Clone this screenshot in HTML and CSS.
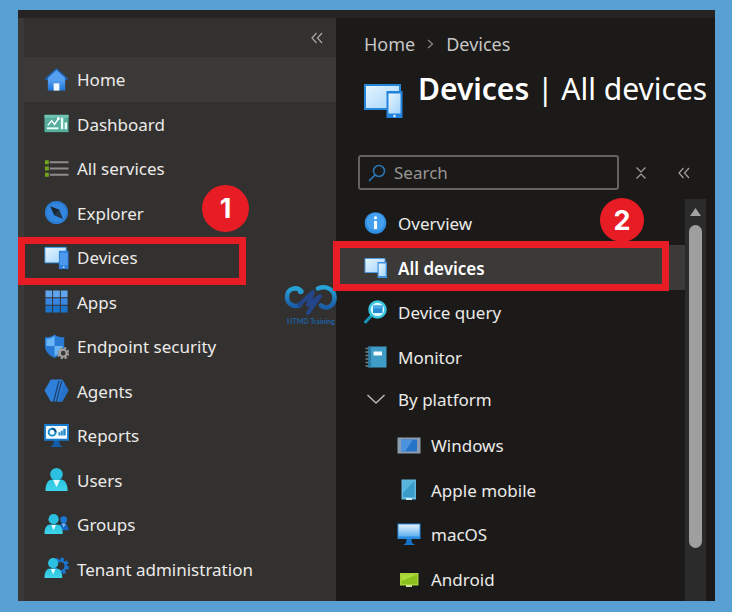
FILE: index.html
```html
<!DOCTYPE html>
<html lang="en">
<head>
<meta charset="utf-8">
<title>Devices | All devices</title>
<link rel="stylesheet" href="styles.css">
</head>
<body>
<svg class="defs" aria-hidden="true">
  <defs>
    <linearGradient id="blue" x1="0" y1="0" x2="0" y2="1"><stop offset="0" stop-color="#5ea9f5"/><stop offset="1" stop-color="#1c74d8"/></linearGradient>
    <linearGradient id="ice" x1="0" y1="0" x2="1" y2="1"><stop offset="0" stop-color="#e6f5ff"/><stop offset="1" stop-color="#a3d4fb"/></linearGradient>
    <linearGradient id="cyan" x1="0" y1="0" x2="0" y2="1"><stop offset="0" stop-color="#2cc3e0"/><stop offset="1" stop-color="#3fd4ea"/></linearGradient>
    <linearGradient id="screen" x1="0" y1="0" x2="0" y2="1"><stop offset="0" stop-color="#e4f1fb"/><stop offset="1" stop-color="#5fb0f0"/></linearGradient>
    <linearGradient id="loop" x1="0" y1="0" x2="0" y2="1"><stop offset="0" stop-color="#26a3d6"/><stop offset="1" stop-color="#1b5ca6"/></linearGradient>
  </defs>
</svg>
<div class="portal">
  <div class="topbar"></div>
  <aside class="sidebar">
    <div class="sidebar-head">
      <button class="icon-button" type="button" aria-label="Collapse menu">
        <svg width="14" height="14" viewBox="0 0 14 14"><path d="M6.500 2 2 7l4.500 5M12 2 7.500 7l4.500 5" fill="none" stroke="#aaa8a6" stroke-width="1.200"/></svg>
      </button>
    </div>
    <nav class="menu" aria-label="Main">
      <a class="item current" href="#home">
        <svg class="icon" viewBox="0 0 26 26"><path d="M4 12h18v12.500H4z" fill="url(#blue)"/><path d="M13 1 .8 12.200l1.400 1.600L4 13h18l1.800.8 1.400-1.600z" fill="#1c62b4"/><path d="M13 3 4 11.500V14h18v-2.500z" fill="#559ff0"/><path d="M10 17h6v7.500h-6z" fill="#f2f8ff"/></svg>
        <span>Home</span></a>
      <a class="item" href="#dashboard">
        <svg class="icon" viewBox="0 0 26 26"><path d="M.5 4h25v18H.5z" fill="#55ae9c"/><path d="M.5 4h25v3H.5z" fill="#71c5b4"/><path d="m4 15 4-5 3 4 4-6" fill="none" stroke="#fff" stroke-width="1.500"/><circle cx="15" cy="8" r="1.500" fill="#fff"/><path d="M3 18h12" stroke="#e8fffa" stroke-width="2"/><path d="M17.500 7h2.500v12h-2.500zM21.500 12h2.500v7h-2.500z" fill="#e8fffa"/></svg>
        <span>Dashboard</span></a>
      <a class="item" href="#services">
        <svg class="icon" viewBox="0 0 26 26"><path d="M1 4.500h4v4H1zM1 11h4v4H1zM1 17.500h4v4H1z" fill="#70a51e"/><path d="M6 6.500h19.500M6 13h19.500M6 19.500h19.500" stroke="#8e8d8c" stroke-width="2"/></svg>
        <span>All services</span></a>
      <a class="item" href="#explorer">
        <svg class="icon" viewBox="0 0 26 26"><circle cx="13" cy="13" r="12" fill="#2b7cd3"/><circle cx="13" cy="13" r="10" fill="#3286df"/><path d="m6.500 6.500 9 3.500 4 9.500-9-4z" fill="#1b2633"/><path d="m15.500 10 4 9.500-9-4z" fill="#253748"/></svg>
        <span>Explorer</span></a>
      <a class="item" href="#devices">
        <svg class="icon" viewBox="0 0 26 26"><path d="M1 2.500h22v16H1z" fill="url(#ice)" stroke="#45a0ea"/><path d="M15.500 6h10v19h-10z" fill="#2f80dd"/><path d="M16.500 8h8v13h-8z" fill="#4c99ee"/><circle cx="20.500" cy="23" r="1" fill="#b9dcff"/></svg>
        <span>Devices</span>
        <span class="marker marker-one"></span><span class="step step-one">1</span></a>
      <a class="item" href="#apps">
        <svg class="icon" viewBox="0 0 26 26"><path d="M1.500 1.500h7v7h-7zM9.500 1.500h7v7h-7zM17.500 1.500h7v7h-7z" fill="#62a5ef"/><path d="M1.500 9.500h7v7h-7zM9.500 9.500h7v7h-7zM17.500 9.500h7v7h-7z" fill="#3987e0"/><path d="M1.500 17.500h7v7h-7zM9.500 17.500h7v7h-7zM17.500 17.500h7v7h-7z" fill="#1a74cc"/></svg>
        <span>Apps</span></a>
      <a class="item" href="#security">
        <svg class="icon" viewBox="0 0 26 26"><path d="M11 .5c3 2.500 6 3 10 3v9c0 6-5 10-10 12.500C6 22.500 1 18.500 1 12.500v-9c4 0 7-.5 10-3z" fill="#297ad5"/><path d="M11 2v10.500H2.500V5C6 5 8.500 4 11 2zM11 12.500h8.500c0 5-4.500 8.500-8.500 10.500z" fill="#69b6f8"/><circle cx="20" cy="20" r="5" fill="none" stroke="#969593" stroke-width="3" stroke-dasharray="2.400 1.530"/><circle cx="20" cy="20" r="3.500" fill="#393837" stroke="#a5a4a2" stroke-width="2"/></svg>
        <span>Endpoint security</span></a>
      <a class="item" href="#agents">
        <svg class="icon" viewBox="0 0 26 26"><path d="M7 1.500h12L25.500 13 19 24.500H7L.5 13z" fill="#2f80da"/><path d="M19 1.500 25.500 13 19 24.500h-4l6-20z" fill="#2672ca"/><path d="m15.500 3-5.500 21.500M18.500 3 13 24" stroke="#1a406c" stroke-width="1.300"/></svg>
        <span>Agents</span></a>
      <a class="item" href="#reports">
        <svg class="icon" viewBox="0 0 26 26"><path d="M10.500 17h5l1 5 3 3h-13l3-3z" fill="#145ca8"/><path d="M1 2h24v15.500H1z" fill="#f0faff" stroke="#1879cc" stroke-width="2"/><circle cx="8.500" cy="9.500" r="3.600" fill="none" stroke="#1b8bc9" stroke-width="2"/><path d="M8.500 5.900a3.600 3.600 0 0 1 3.600 3.600" fill="none" stroke="#0b4e86" stroke-width="2"/><path d="M15 13V9.500h2V13zM17.500 13V8h2V13zM20 13V6h2.500v7z" fill="#2788c8"/></svg>
        <span>Reports</span></a>
      <a class="item" href="#users">
        <svg class="icon" viewBox="0 0 26 26"><path d="M1.500 25c0-8 3-12 7-12h9c4 0 7 4 7 12z" fill="url(#cyan)"/><circle cx="13" cy="7.500" r="6.500" fill="#2bc0df"/><path d="M9.500 13.500h7L13 21z" fill="#e7fcff"/></svg>
        <span>Users</span></a>
      <a class="item" href="#groups">
        <svg class="icon" viewBox="0 0 26 26"><path d="M15 19c0-5 2-7 4-7h2c2.500 0 4.500 3 4.500 7z" fill="#1767c2"/><circle cx="20.500" cy="8" r="3.500" fill="#1c76d4"/><path d="M18.500 12h4l-2 4z" fill="#7fc2ff"/><path d="M.5 23c0-7 2.500-10 6-10h7c3.500 0 6 3 6 10z" fill="url(#cyan)"/><circle cx="10" cy="7.500" r="5.300" fill="#2bc0df"/><path d="M7.500 13.500h5L10 19z" fill="#e7fcff"/></svg>
        <span>Groups</span></a>
      <a class="item" href="#tenant">
        <svg class="icon" viewBox="0 0 26 26"><circle cx="17" cy="10.500" r="7.200" fill="none" stroke="#1b73cd" stroke-width="3.500" stroke-dasharray="3.400 2.255"/><circle cx="17" cy="10.500" r="5.500" fill="#323130" stroke="#1b73cd" stroke-width="2.500"/><path d="M.5 23c0-7 2.500-10 6-10h6.500c3.500 0 6 3 6 10z" fill="url(#cyan)"/><circle cx="9.500" cy="7.500" r="5.300" fill="#2bc0df"/><path d="M7 13.500h5L9.500 19z" fill="#e7fcff"/></svg>
        <span>Tenant administration</span></a>
    </nav>
    <div class="watermark">
      <svg width="54" height="32" viewBox="0 0 54 32"><path d="M17.500 7.500C13 2 3 4 3 13c0 7 7 11 13 8" fill="none" stroke="url(#loop)" stroke-width="4.500" stroke-linecap="round"/><path d="M34 4.500c9-3.500 17 2 16.500 10-.5 8-8.500 11.500-13.500 7" fill="none" stroke="url(#loop)" stroke-width="4.500" stroke-linecap="round"/><path d="m15 21 14-13-5 13 12-9-12 17" fill="none" stroke="#23468b" stroke-width="4" stroke-linejoin="round" stroke-linecap="round"/><circle cx="16.500" cy="7.500" r="2.700" fill="#2899cc"/></svg>
      <span>HTMD Training</span>
    </div>
  </aside>
  <main class="blade">
    <nav class="breadcrumb" aria-label="Breadcrumb">
      <a href="#home">Home</a>
      <svg width="7" height="10" viewBox="0 0 7 10"><path d="m1 1 4.500 4L1 9" fill="none" stroke="#8d8b89" stroke-width="1.200"/></svg>
      <a href="#devices">Devices</a>
    </nav>
    <header class="title">
      <svg width="40" height="36" viewBox="0 0 40 36"><path d="M1 2h35v24H1z" fill="url(#ice)" stroke="#2486d8" stroke-width="2"/><path d="M22.500 8h16v27h-16z" fill="#2383da"/><path d="M24.500 10.500h12v20h-12z" fill="url(#ice)"/><circle cx="30.500" cy="33" r="1.300" fill="#d8efff"/></svg>
      <h1>Devices <span>| All devices</span></h1>
    </header>
    <div class="tools">
      <label class="search">
        <svg width="18" height="18" viewBox="0 0 18 18"><circle cx="11" cy="7" r="5.500" fill="none" stroke="#2d77b4" stroke-width="1.500"/><path d="m7 11-6 6" stroke="#2d77b4" stroke-width="1.700"/></svg>
        <input type="search" placeholder="Search" aria-label="Search">
      </label>
      <button class="icon-button" type="button" aria-label="Collapse groups">
        <svg width="12" height="14" viewBox="0 0 12 14"><path d="m1.500 1.500 4.500 4.500 4.500-4.500M1.500 12.500 6 8l4.500 4.500" fill="none" stroke="#a3a19f" stroke-width="1.200"/></svg>
      </button>
      <button class="icon-button" type="button" aria-label="Hide menu">
        <svg width="14" height="14" viewBox="0 0 14 14"><path d="M6.500 2 2 7l4.500 5M12 2 7.500 7l4.500 5" fill="none" stroke="#a3a19f" stroke-width="1.200"/></svg>
      </button>
    </div>
    <div class="content">
      <nav class="menu submenu" aria-label="Devices">
        <a class="item" href="#overview">
          <svg class="icon" viewBox="0 0 24 24"><circle cx="11.500" cy="12" r="10.800" fill="#2f8fe4"/><circle cx="11.500" cy="11" r="9" fill="#45a1ef"/><circle cx="11.500" cy="6.800" r="1.600" fill="#fff"/><path d="M10 10h3v8h-3z" fill="#fff"/></svg>
          <span>Overview</span></a>
        <a class="item current" href="#all">
          <svg class="icon" viewBox="0 0 24 24"><path d="M1 2.500h20v14H1z" fill="url(#ice)" stroke="#5399da"/><path d="M13.500 6h9.500v16h-9.500z" fill="#3f8fdb"/><path d="M14.700 7.500h7v12.500h-7z" fill="url(#ice)"/></svg>
          <span>All devices</span>
          <span class="marker marker-two"></span><span class="step step-two">2</span></a>
        <a class="item" href="#query">
          <svg class="icon" viewBox="0 0 24 24"><path d="m8 15-6.500 7" stroke="#1696ba" stroke-width="3" stroke-linecap="round"/><circle cx="13.500" cy="9.500" r="8" fill="#dcfbff" stroke="#38c6df" stroke-width="2.500"/><path d="M9 5.500h9.500v7.500H9z" fill="#258bd2"/><path d="M9 5.500h9.500v3H9z" fill="#48a9e5"/></svg>
          <span>Device query</span></a>
        <a class="item" href="#monitor">
          <svg class="icon" viewBox="0 0 24 24"><path d="M4.500 1.500h18v21h-18z" fill="#3f9cc6"/><path d="M9.500 6.500H18v4H9.500z" fill="#f2fbff"/><path d="M1.500 3.500h4M1.500 7h4M1.500 10.500h4M1.500 14h4M1.500 17.500h4M1.500 21h4" stroke="#6b8693" stroke-width="1.500"/><path d="M4.500 1.500h2.500v21H4.500z" fill="#287da7"/></svg>
          <span>Monitor</span></a>
        <button class="item group" type="button" aria-expanded="true">
          <svg class="icon" viewBox="0 0 24 24"><path d="m3.500 8 8.500 8 8.500-8" fill="none" stroke="#bab8b6" stroke-width="1.500"/></svg>
          <span>By platform</span></button>
        <a class="item nested" href="#windows">
          <svg class="icon" viewBox="0 0 24 24"><path d="M.5 4.500h23v16H.5z" fill="#8d9caf"/><path d="M4 6.500h16v12H4z" fill="#2673ca"/><path d="M4 6.500h12l-8 12H4z" fill="#4c92df"/></svg>
          <span>Windows</span></a>
        <a class="item nested" href="#apple">
          <svg class="icon" viewBox="0 0 24 24"><path d="M4.500 1.500H19v20H4.500z" fill="#64b7dd"/><path d="M6 3h11.500v16H6z" fill="#3a9ac8"/><path d="M6 3h11.500L6 15z" fill="#56b5dd"/><path d="M9 20h6v2H9z" fill="#c9e9f6"/></svg>
          <span>Apple mobile</span></a>
        <a class="item nested" href="#macos">
          <svg class="icon" viewBox="0 0 24 24"><path d="M9.500 17h5l.5 4 3 2H6l3-2z" fill="#1674c8"/><path d="M.5 1.500h23V17H.5z" fill="#2b8de2"/><path d="M1.500 2.500h21v12h-21z" fill="url(#screen)"/></svg>
          <span>macOS</span></a>
        <a class="item nested" href="#android">
          <svg class="icon" viewBox="0 0 24 24"><path d="M3 6h18.500v12.500H3z" fill="#a8d43a"/><path d="M4.500 7.500H20V17H4.500z" fill="#8cc21d"/><path d="M4.500 7.500H20L4.500 14z" fill="#b0dc3f"/><path d="M9 18h6v2H9z" fill="#c9dfa0"/></svg>
          <span>Android</span></a>
      </nav>
      <div class="scrollbar" aria-hidden="true">
        <svg width="11" height="8" viewBox="0 0 11 8"><path d="M5.500 0 11 8H0z" fill="#a3a3a3"/></svg>
        <div class="thumb"></div>
      </div>
    </div>
  </main>
</div>
</body>
</html>
```
FILE: styles.css
```css
* { box-sizing: border-box; }

body {
  margin: 0;
  padding: 10px 17px 11px 18px;
  display: flex;
  min-height: 100vh;
  background: #58a0d4;
  color: #eceae8;
  font: 17px/24px "Noto Sans", "Open Sans", sans-serif;
}

a { color: inherit; text-decoration: none; }

button {
  padding: 0;
  border: 0;
  background: none;
  color: inherit;
  font: inherit;
  text-align: left;
}

.defs { position: absolute; width: 0; height: 0; }

.portal {
  flex: 1;
  display: grid;
  grid-template-columns: 318px minmax(0, 1fr);
  grid-template-rows: 8px 1fr;
  background: #1b1a19;
}

.topbar { grid-column: 1 / -1; background: #252423; }

.sidebar {
  position: relative;
  display: flex;
  flex-direction: column;
  padding-bottom: 10px;
  border-left: 6px solid #3a3938;
  background: #323130;
}

.sidebar-head {
  display: flex;
  align-items: center;
  justify-content: flex-end;
  height: 39px;
  padding-right: 12px;
}

.icon-button { display: flex; }

.menu { flex: 1; display: flex; flex-direction: column; }

.item {
  position: relative;
  flex: 1 0 40px;
  display: flex;
  align-items: center;
  gap: 8px;
  padding-left: 20px;
}
.item .icon + span { padding-top: 2px; }

.current { background: #3b3a39; }

.icon { flex: none; width: 25px; height: 25px; }

.marker { position: absolute; z-index: 2; border: 7px solid #e81c24; }
.marker-one { top: 2px; left: -6px; width: 228px; height: 48px; }
.marker-two { top: -4px; left: -3px; width: 336px; height: 50px; }

.step {
  position: absolute;
  z-index: 3;
  display: grid;
  place-items: center;
  border-radius: 50%;
  background: #e81c24;
  color: #fff;
  font: 700 27px/1 Inter, "Liberation Sans", sans-serif;
}
.step-one { top: -50px; left: 178px; width: 47px; height: 47px; }
.step-two { top: -47px; left: 264px; width: 44px; height: 44px; }

.watermark {
  position: absolute;
  z-index: 1;
  top: 266px;
  right: -2px;
  display: flex;
  flex-direction: column;
  align-items: center;
  color: #1f5f9f;
  font: bold 7px/10px Lato, sans-serif;
}

.blade { display: flex; flex-direction: column; }

.breadcrumb {
  display: flex;
  align-items: center;
  gap: 12px;
  padding: 14px 0 0 28px;
  color: #c8c6c4;
  font-size: 18px;
}

.title {
  display: flex;
  align-items: flex-start;
  gap: 14px;
  padding: 13px 0 0 28px;
}
.title svg { flex: none; margin-top: 14px; }

h1 {
  margin: 0;
  color: #fff;
  font-size: 30px;
  font-weight: 600;
  line-height: 40px;
  white-space: nowrap;
}
h1 span { font-weight: 400; }

.tools {
  display: flex;
  align-items: center;
  gap: 16px;
  padding: 36px 24px 0 22px;
}
.tools .icon-button + .icon-button { margin-left: 14px; }

.search {
  flex: 1;
  min-width: 0;
  display: flex;
  align-items: center;
  gap: 8px;
  height: 35px;
  padding: 0 8px;
  border: 2px solid #656361;
  border-radius: 3px;
}
.search input {
  flex: 1;
  min-width: 0;
  padding: 0;
  border: 0;
  outline: 0;
  background: none;
  color: inherit;
  font: inherit;
}
.search input::placeholder { color: #979593; opacity: 1; }

.content { flex: 1; display: flex; margin: 9px 9px 0 0; }

.submenu { padding-top: 2px; }
.submenu .item { gap: 10px; padding-left: 28px; }
.submenu .icon { width: 24px; height: 24px; }
.submenu .current { font-weight: 600; color: #fff; }
.submenu .group { padding-bottom: 4px; }
.submenu .nested { padding-left: 61px; }

.scrollbar {
  display: flex;
  flex-direction: column;
  align-items: center;
  gap: 9px;
  width: 21px;
  padding: 9px 0 53px;
  background: #2b2b2b;
}
.thumb { flex: 1; width: 13px; border-radius: 7px; background: #9f9f9f; }
```
